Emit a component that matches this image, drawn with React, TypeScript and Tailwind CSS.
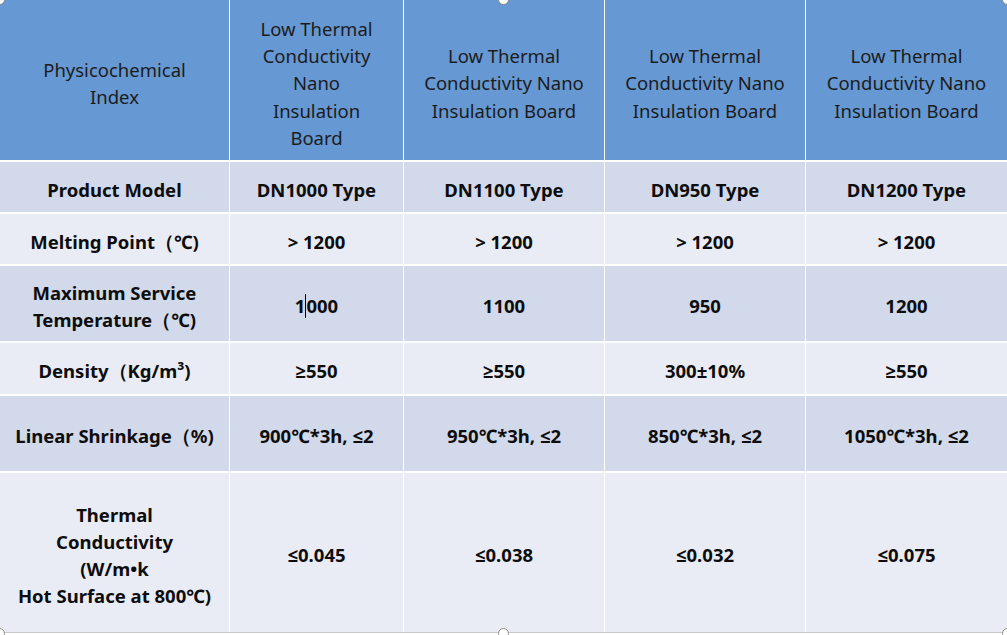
import React from "react";

const cols = "grid-cols-[229px_173px_200px_200px_201px]";

const header = [
  <>Physicochemical<br />Index</>,
  <>Low Thermal<br />Conductivity<br />Nano<br />Insulation<br />Board</>,
  <>Low Thermal<br />Conductivity Nano<br />Insulation Board</>,
  <>Low Thermal<br />Conductivity Nano<br />Insulation Board</>,
  <>Low Thermal<br />Conductivity Nano<br />Insulation Board</>,
];

type Row = { h: string; bg: string; cells: React.ReactNode[] };

const rows: Row[] = [
  { h: "h-[50px]", bg: "bg-[#d1d9ea]", cells: ["Product Model", "DN1000 Type", "DN1100 Type", "DN950 Type", "DN1200 Type"] },
  { h: "h-[50px]", bg: "bg-[#e9ecf5]", cells: ["Melting Point（℃)", "> 1200", "> 1200", "> 1200", "> 1200"] },
  {
    h: "h-[75px]",
    bg: "bg-[#d1d9ea]",
    cells: [
      <>Maximum Service<br />Temperature（℃)</>,
      <>1<span className="inline-block w-0 h-[24px] border-l border-black align-middle -mt-[3px]" />000</>,
      "1100",
      "950",
      "1200",
    ],
  },
  { h: "h-[51px]", bg: "bg-[#e9ecf5]", cells: ["Density（Kg/m³)", "≥550", "≥550", "300±10%", "≥550"] },
  { h: "h-[75px]", bg: "bg-[#d1d9ea]", cells: ["Linear Shrinkage（%)", "900℃*3h, ≤2", "950℃*3h, ≤2", "850℃*3h, ≤2", "1050℃*3h, ≤2"] },
  {
    h: "h-[159px]",
    bg: "bg-[#e9ecf5]",
    cells: [
      <>Thermal<br />Conductivity<br />(W/m•k<br />Hot Surface at 800℃)</>,
      "≤0.045",
      "≤0.038",
      "≤0.032",
      "≤0.075",
    ],
  },
];

function Handle({ cls }: { cls: string }) {
  return <div className={`absolute w-[11px] h-[11px] rounded-full bg-white border border-[#8a8a8a] ${cls}`} />;
}

export default function App() {
  return (
    <div className="relative w-[1007px] h-[635px] bg-white overflow-hidden" style={{ fontFamily: '"Noto Sans", "Open Sans", sans-serif' }}>
      <div className="flex flex-col w-[1007px] bg-white border-b border-[#c8c8c8]">
        <div className={`grid ${cols} gap-x-[1px] h-[160px]`}>
          {header.map((c, i) => (
            <div key={i} className="bg-[#6698d3] flex items-center justify-center text-center text-[18.5px] leading-[27.2px] pt-[6px] text-[#1c1c1c]">
              <div>{c}</div>
            </div>
          ))}
        </div>
        {rows.map((r, ri) => (
          <div key={ri} className={`grid ${cols} gap-x-[1px] ${r.h} mt-[2px]`}>
            {r.cells.map((c, i) => (
              <div key={i} className={`${r.bg} flex items-center justify-center text-center text-[18.5px] leading-[27px] pt-[4px] font-bold text-[#0d0d0d]`}>
                <div>{c}</div>
              </div>
            ))}
          </div>
        ))}
      </div>
      <Handle cls="left-[498px] -top-[6px]" />
      <Handle cls="left-[498px] top-[628px]" />
      <Handle cls="-left-[6px] -top-[6px]" />
      <Handle cls="left-[1002px] -top-[6px]" />
      <Handle cls="left-[1002px] top-[628px]" />
      <Handle cls="-left-[6px] top-[628px]" />
    </div>
  );
}
